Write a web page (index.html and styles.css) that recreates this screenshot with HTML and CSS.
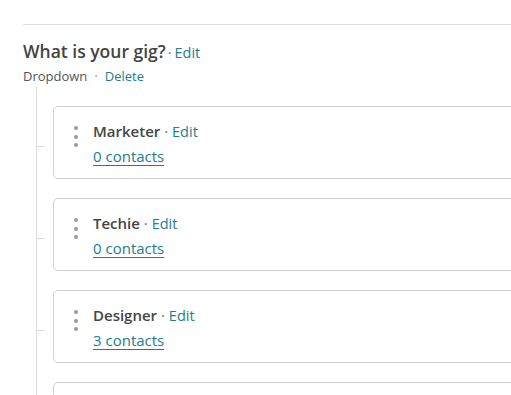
FILE: index.html
```html
<!DOCTYPE html>
<html>
<head>
<meta charset="utf-8">
<link rel="stylesheet" href="styles.css">
</head>
<body>
<div class="page">
  <div class="rule"></div>
  <div class="field">
    <h2 class="title">What is your gig?<span class="sep">·</span><a class="link" href="#">Edit</a></h2>
    <div class="meta">Dropdown <span class="dot">•</span> <a class="link" href="#">Delete</a></div>
  </div>
  <div class="tree">
    <div class="card">
      <span class="handle"><i></i><i></i><i></i></span>
      <div class="info">
        <div class="name">Marketer <span class="sep">·</span> <a class="link" href="#">Edit</a></div>
        <a class="count" href="#">0 contacts</a>
      </div>
    </div>
    <div class="card">
      <span class="handle"><i></i><i></i><i></i></span>
      <div class="info">
        <div class="name">Techie <span class="sep">·</span> <a class="link" href="#">Edit</a></div>
        <a class="count" href="#">0 contacts</a>
      </div>
    </div>
    <div class="card">
      <span class="handle"><i></i><i></i><i></i></span>
      <div class="info">
        <div class="name">Designer <span class="sep">·</span> <a class="link" href="#">Edit</a></div>
        <a class="count" href="#">3 contacts</a>
      </div>
    </div>
    <div class="card">
      <span class="handle"><i></i><i></i><i></i></span>
      <div class="info">
        <div class="name">Other <span class="sep">·</span> <a class="link" href="#">Edit</a></div>
        <a class="count" href="#">0 contacts</a>
      </div>
    </div>
  </div>
</div>
</body>
</html>
```
FILE: styles.css
```css
html, body {
  margin: 0;
  padding: 0;
  background: #fff;
  overflow: hidden;
}
body {
  font-family: "Open Sans", "Noto Sans", sans-serif;
  color: #454545;
}
.page {
  padding: 24px 0 0 23px;
}
.rule {
  border-top: 1px solid #dedede;
  margin-right: -20px;
}
.field {
  padding-top: 14px;
}
.title {
  margin: 0;
  font-size: 17.5px;
  font-weight: 600;
  line-height: 24px;
  color: #444;
}
.title .sep {
  font-weight: 400;
  font-size: 14.5px;
  color: #666;
  margin: 0 3px 0 2px;
}
.link {
  color: #237d8c;
  text-decoration: none;
  font-weight: 400;
}
.title .link {
  font-size: 14.5px;
}
.meta {
  font-size: 13px;
  line-height: 18px;
  margin-top: 2px;
  color: #555;
}
.meta .dot {
  font-size: 7px;
  color: #999;
  vertical-align: 2px;
  margin: 0 4px;
}
.tree {
  margin-left: 13px;
  margin-top: 1px;
  border-left: 1px solid #dcdcdc;
  padding: 19px 0 0 16px;
}
.card {
  position: relative;
  display: flex;
  align-items: flex-start;
  height: 73px;
  box-sizing: border-box;
  border: 1px solid #d2d2d2;
  border-radius: 5px;
  margin-right: -30px;
  margin-bottom: 19px;
  padding: 12px 0 0 20px;
}
.card::before {
  content: "";
  position: absolute;
  left: -17px;
  top: 39px;
  width: 8px;
  height: 1px;
  background: #dcdcdc;
}
.handle {
  display: flex;
  flex-direction: column;
  gap: 4.5px;
  margin-top: 7px;
  width: 19px;
}
.handle i {
  display: block;
  width: 4px;
  height: 4px;
  border-radius: 50%;
  background: #9a9a9a;
}
.info {
  display: flex;
  flex-direction: column;
}
.name {
  font-size: 15px;
  font-weight: 600;
  line-height: 24px;
}
.name .sep {
  font-weight: 400;
  color: #666;
}
.name .link {
  font-size: 14.5px;
}
.count {
  font-size: 15px;
  line-height: 24px;
  color: #237d8c;
  text-decoration: underline;
  text-underline-offset: 3px;
  text-decoration-color: #237d8c;
  align-self: flex-start;
}
```
